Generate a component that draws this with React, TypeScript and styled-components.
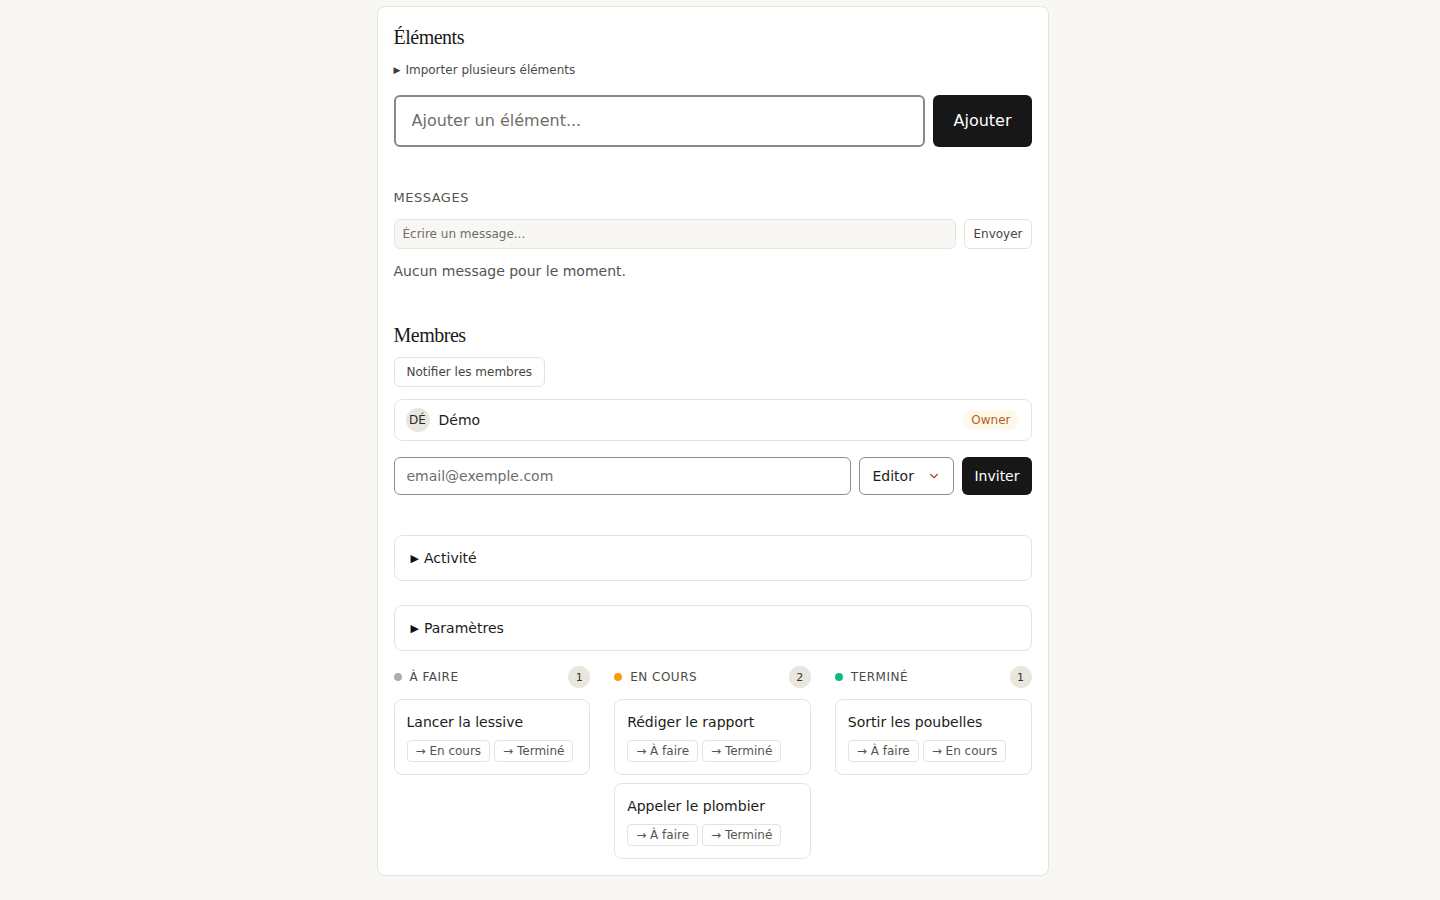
import React from "react";
import styled, { createGlobalStyle } from "styled-components";
import { ChevronDown } from "lucide-react";

const Global = createGlobalStyle`
  * { box-sizing: border-box; }
  html, body { margin: 0; padding: 0; background: #f8f7f4; }
  body { font-family: "DejaVu Sans", "Noto Sans", sans-serif; color: #1c1c1a; }
`;

const Page = styled.div`
  display: flex;
  justify-content: center;
  padding: 6px 15px 24px 0;
`;

const Card = styled.main`
  width: 672px;
  background: #ffffff;
  border: 1px solid #e6e3dc;
  border-radius: 8px;
  padding: 16px 16px 16px;
  display: flex;
  flex-direction: column;
`;

const Heading = styled.h2<{ $mt?: number }>`
  margin: ${(p) => p.$mt ?? 0}px 0 0;
  font-family: "Liberation Serif", "Times New Roman", serif;
  font-weight: 400;
  font-size: 20px;
  letter-spacing: -0.5px;
  line-height: 28px;
  color: #1a1a18;
`;

const ImportDetails = styled.details`
  margin-top: 10px;
  font-size: 12px;
  line-height: 18px;
  color: #4a4a46;
  summary {
    list-style: none;
    display: flex;
    align-items: center;
    gap: 5px;
    cursor: pointer;
  }
  summary::-webkit-details-marker { display: none; }
`;

const SmallTri = styled.span`
  font-size: 9px;
  color: #3a3a36;
`;

const Row = styled.div<{ $mt: number; $gap?: number }>`
  display: flex;
  gap: ${(p) => p.$gap ?? 8}px;
  margin-top: ${(p) => p.$mt}px;
`;

const BigInput = styled.input`
  flex: 1;
  height: 52px;
  border: 2px solid #8c8a7e;
  border-radius: 6px;
  padding: 0 16px 1px;
  font-family: inherit;
  font-size: 16px;
  color: #1c1c1a;
  outline: none;
  &::placeholder { color: #6e6e68; }
`;

const DarkButton = styled.button<{ $h: number; $fs: number; $px: number }>`
  height: ${(p) => p.$h}px;
  padding: 0 ${(p) => p.$px}px;
  background: #171717;
  color: #ffffff;
  border: none;
  border-radius: 6px;
  font-family: inherit;
  font-size: ${(p) => p.$fs}px;
  line-height: 1;
  cursor: pointer;
`;

const Label = styled.div`
  margin-top: 42px;
  font-size: 13px;
  line-height: 18px;
  letter-spacing: 0.5px;
  text-transform: uppercase;
  color: #55554f;
`;

const MsgInput = styled.input`
  flex: 1;
  height: 30px;
  background: #f8f7f3;
  border: 1px solid #e8e5de;
  border-radius: 6px;
  padding: 0 8px;
  font-family: inherit;
  font-size: 12px;
  outline: none;
  &::placeholder { color: #6e6e68; }
`;

const LightButton = styled.button<{ $h: number; $px: number }>`
  height: ${(p) => p.$h}px;
  padding: 0 ${(p) => p.$px}px;
  background: #ffffff;
  border: 1px solid #e5e2db;
  border-radius: 6px;
  font-family: inherit;
  font-size: 12px;
  color: #44443f;
  cursor: pointer;
`;

const Empty = styled.p`
  margin: 12px 0 0;
  font-size: 14px;
  line-height: 20px;
  color: #55554f;
`;

const NotifyWrap = styled.div`
  margin-top: 8px;
  display: flex;
`;

const MemberRow = styled.div`
  margin-top: 12px;
  height: 42px;
  border: 1px solid #e6e3dc;
  border-radius: 8px;
  padding: 0 12px 0 11px;
  display: flex;
  align-items: center;
  gap: 9px;
`;

const Avatar = styled.span`
  width: 24px;
  height: 24px;
  border-radius: 50%;
  background: #e8e6df;
  display: inline-flex;
  align-items: center;
  justify-content: center;
  font-size: 12px;
  color: #2a2a26;
`;

const MemberName = styled.span`
  flex: 1;
  font-size: 14px;
  color: #1c1c1a;
`;

const OwnerPill = styled.span`
  height: 20px;
  padding: 0 8px;
  border-radius: 10px;
  background: #fef8ea;
  color: #b45f1e;
  font-size: 12px;
  display: inline-flex;
  align-items: center;
`;

const EmailInput = styled.input`
  flex: 1;
  height: 38px;
  border: 1px solid #8f8f8b;
  border-radius: 6px;
  padding: 0 12px;
  font-family: inherit;
  font-size: 14px;
  outline: none;
  &::placeholder { color: #6e6e68; }
`;

const SelectBox = styled.div`
  width: 95px;
  height: 38px;
  border: 1px solid #8f8f8b;
  border-radius: 6px;
  padding: 0 12px;
  display: flex;
  align-items: center;
  justify-content: space-between;
  font-size: 14px;
  color: #1c1c1a;
`;

const Panel = styled.details<{ $mt: number }>`
  margin-top: ${(p) => p.$mt}px;
  border: 1px solid #e6e3dc;
  border-radius: 8px;
  summary {
    list-style: none;
    height: 44px;
    padding: 0 16px;
    display: flex;
    align-items: center;
    gap: 5px;
    font-size: 14px;
    color: #1c1c1a;
    cursor: pointer;
  }
  summary::-webkit-details-marker { display: none; }
`;

const Tri = styled.span`
  font-size: 11px;
  color: #111;
`;

const Board = styled.div`
  margin-top: 15px;
  display: grid;
  grid-template-columns: repeat(3, 1fr);
  gap: 24px;
  align-items: start;
`;

const Column = styled.section`
  display: flex;
  flex-direction: column;
  gap: 8px;
`;

const ColHeader = styled.div`
  height: 22px;
  margin-bottom: 3px;
  display: flex;
  align-items: center;
  gap: 8px;
`;

const Dot = styled.span<{ $c: string }>`
  width: 8px;
  height: 8px;
  border-radius: 50%;
  background: ${(p) => p.$c};
`;

const ColTitle = styled.span`
  flex: 1;
  font-size: 12px;
  letter-spacing: 0.5px;
  text-transform: uppercase;
  color: #4a4a45;
`;

const Count = styled.span`
  width: 22px;
  height: 22px;
  border-radius: 50%;
  background: #e8e6dd;
  display: inline-flex;
  align-items: center;
  justify-content: center;
  font-size: 11px;
  color: #33332f;
`;

const TaskCard = styled.div`
  border: 1px solid #e6e3dc;
  border-radius: 8px;
  padding: 12px;
  display: flex;
  flex-direction: column;
  gap: 8px;
`;

const TaskTitle = styled.div`
  font-size: 14px;
  line-height: 20px;
  color: #1c1c1a;
`;

const Moves = styled.div`
  display: flex;
  gap: 4px;
`;

const MoveBtn = styled.button`
  height: 22px;
  padding: 0 8px;
  background: #fff;
  border: 1px solid #e6e3dc;
  border-radius: 4px;
  font-family: inherit;
  font-size: 12px;
  color: #55554f;
  cursor: pointer;
`;

type Task = { title: string; moves: string[] };
const columns: { title: string; color: string; tasks: Task[] }[] = [
  { title: "À faire", color: "#acaca8", tasks: [{ title: "Lancer la lessive", moves: ["En cours", "Terminé"] }] },
  {
    title: "En cours",
    color: "#f59e0b",
    tasks: [
      { title: "Rédiger le rapport", moves: ["À faire", "Terminé"] },
      { title: "Appeler le plombier", moves: ["À faire", "Terminé"] },
    ],
  },
  { title: "Terminé", color: "#10b981", tasks: [{ title: "Sortir les poubelles", moves: ["À faire", "En cours"] }] },
];

export default function App() {
  return (
    <>
      <Global />
      <Page>
        <Card>
          <Heading>Éléments</Heading>
          <ImportDetails>
            <summary>
              <SmallTri>▶</SmallTri>Importer plusieurs éléments
            </summary>
          </ImportDetails>
          <Row $mt={16}>
            <BigInput placeholder="Ajouter un élément..." />
            <DarkButton $h={52} $fs={16} $px={20}>Ajouter</DarkButton>
          </Row>

          <Label>Messages</Label>
          <Row $mt={12}>
            <MsgInput placeholder="Écrire un message..." />
            <LightButton $h={30} $px={8}>Envoyer</LightButton>
          </Row>
          <Empty>Aucun message pour le moment.</Empty>

          <Heading $mt={40}>Membres</Heading>
          <NotifyWrap>
            <LightButton $h={30} $px={12}>Notifier les membres</LightButton>
          </NotifyWrap>
          <MemberRow>
            <Avatar>DÉ</Avatar>
            <MemberName>Démo</MemberName>
            <OwnerPill>Owner</OwnerPill>
          </MemberRow>
          <Row $mt={16}>
            <EmailInput placeholder="email@exemple.com" />
            <SelectBox>
              Editor
              <ChevronDown size={14} color="#a5502a" strokeWidth={2} />
            </SelectBox>
            <DarkButton $h={38} $fs={14} $px={12}>Inviter</DarkButton>
          </Row>

          <Panel $mt={40}>
            <summary>
              <Tri>▶</Tri>Activité
            </summary>
          </Panel>
          <Panel $mt={24}>
            <summary>
              <Tri>▶</Tri>Paramètres
            </summary>
          </Panel>

          <Board>
            {columns.map((col) => (
              <Column key={col.title}>
                <ColHeader>
                  <Dot $c={col.color} />
                  <ColTitle>{col.title}</ColTitle>
                  <Count>{col.tasks.length}</Count>
                </ColHeader>
                {col.tasks.map((t) => (
                  <TaskCard key={t.title}>
                    <TaskTitle>{t.title}</TaskTitle>
                    <Moves>
                      {t.moves.map((m) => (
                        <MoveBtn key={m}>→ {m}</MoveBtn>
                      ))}
                    </Moves>
                  </TaskCard>
                ))}
              </Column>
            ))}
          </Board>
        </Card>
      </Page>
    </>
  );
}
